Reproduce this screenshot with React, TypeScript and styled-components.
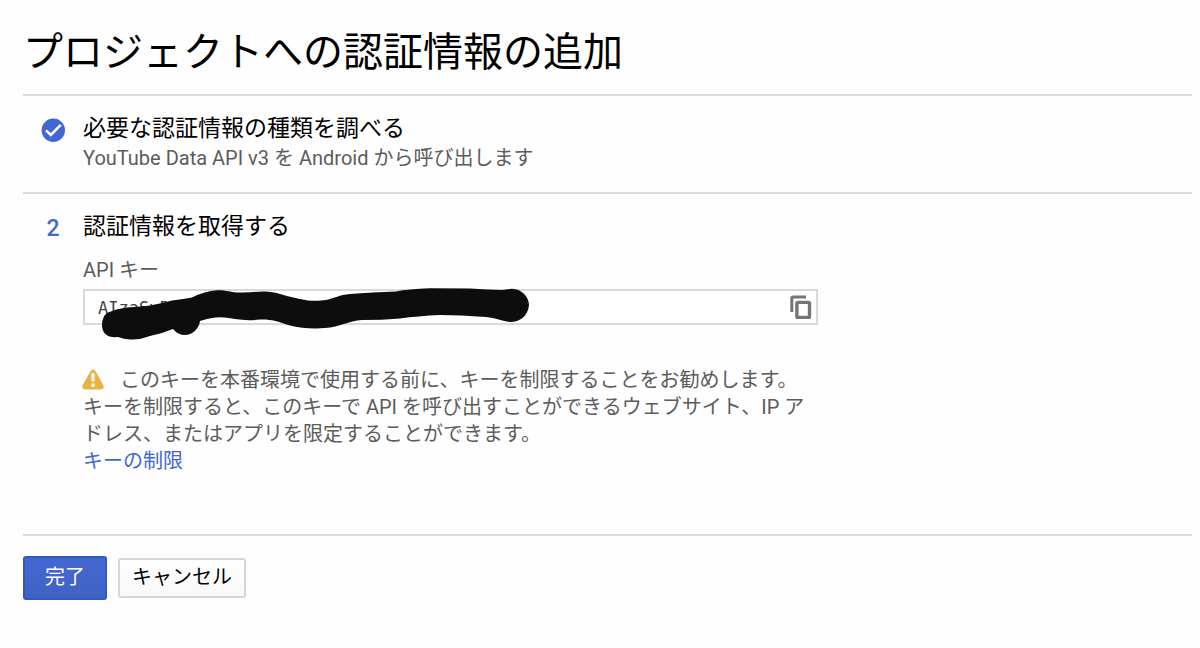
import React from "react";
import styled, { createGlobalStyle } from "styled-components";

const GlobalStyle = createGlobalStyle`
  *, *::before, *::after { box-sizing: border-box; }
  body {
    margin: 0;
    background: #fefefe;
    color: #000;
    font-family: Roboto, "Noto Sans CJK JP", sans-serif;
    font-size: 20px;
    line-height: 27px;
  }
`;

const Page = styled.main`
  padding: 0 8px 24px 23px;
`;

const Title = styled.h1`
  margin: 0;
  padding: 23px 0 11px;
  font-size: 40px;
  line-height: 60px;
  font-weight: 400;
`;

const Step = styled.section<{ $bottom: number }>`
  display: grid;
  grid-template-columns: 60px minmax(0, 1fr);
  border-top: 2px solid #d9d9d9;
  padding: 17px 0 ${(p) => p.$bottom}px;
`;

const Marker = styled.div`
  display: flex;
  align-items: center;
  justify-content: center;
  height: 34px;
  color: #4267d2;
  font-size: 23px;
  font-weight: 500;
`;

const StepTitle = styled.h2`
  margin: 0;
  font-size: 23px;
  line-height: 32px;
  font-weight: 400;
`;

const Summary = styled.p`
  margin: 0;
  color: #5c5c5c;
`;

const Form = styled.div`
  max-width: 735px;
`;

const Label = styled.label`
  display: block;
  margin: 14px 0 5px;
  color: #5c5c5c;
`;

const Field = styled.div`
  position: relative;
  display: flex;
  align-items: center;
  height: 36px;
  border: 2px solid #d9d9d9;
  background: #fff;
`;

const KeyInput = styled.input`
  flex: 1;
  min-width: 0;
  padding: 2px 0 0 13px;
  border: 0;
  outline: 0;
  background: transparent;
  color: #444;
  font-family: "DejaVu Sans Mono", monospace;
  font-size: 17px;
  line-height: 24px;
`;

const CopyButton = styled.button`
  display: flex;
  padding: 0;
  margin-right: 2px;
  border: 0;
  background: none;
  cursor: pointer;
`;

const Redaction = styled.svg`
  position: absolute;
  left: 15px;
  top: -5px;
  pointer-events: none;
`;

const Warning = styled.p`
  margin: 42px 0 0;
  padding-right: 8px;
  color: #5c5c5c;
`;

const WarningIcon = styled.svg`
  margin: 0 16px 0 -1px;
  vertical-align: -3px;
`;

const TextLink = styled.a`
  display: block;
  width: fit-content;
  color: #4267d2;
  text-decoration: none;
`;

const Actions = styled.footer`
  display: flex;
  align-items: center;
  gap: 11px;
  border-top: 2px solid #d9d9d9;
  padding-top: 20px;
`;

const Button = styled.button<{ $primary?: boolean }>`
  height: ${(p) => (p.$primary ? 44 : 40)}px;
  padding: ${(p) => (p.$primary ? "0 20px 1px" : "0 12px 1px")};
  border: 2px solid ${(p) => (p.$primary ? "#2d5acb" : "#d6d6d6")};
  border-radius: 3px;
  background: ${(p) =>
    p.$primary
      ? "linear-gradient(#4468d2, #3f62c4)"
      : "linear-gradient(#fff, #f8f8f8)"};
  color: ${(p) => (p.$primary ? "#fff" : "#000")};
  font: inherit;
  cursor: pointer;
`;

export default function App() {
  return (
    <>
      <GlobalStyle />
      <Page>
        <Title>プロジェクトへの認証情報の追加</Title>

        <Step $bottom={20}>
          <Marker>
            <svg width="24" height="24" viewBox="0 0 24 24" role="img" aria-label="完了">
              <circle cx="12.3" cy="12.3" r="11.7" fill="#4267d2" />
              <path d="M5 12.4 9.8 17 19.8 6.8" fill="none" stroke="#fff" strokeWidth="2.6" />
            </svg>
          </Marker>
          <div>
            <StepTitle>必要な認証情報の種類を調べる</StepTitle>
            <Summary>YouTube Data API v3 を Android から呼び出します</Summary>
          </div>
        </Step>

        <Step $bottom={59}>
          <Marker>2</Marker>
          <div>
            <StepTitle>認証情報を取得する</StepTitle>
            <Form>
              <Label htmlFor="api-key">API キー</Label>
              <Field>
                <KeyInput id="api-key" readOnly defaultValue="AIzaSyB" />
                <CopyButton type="button" aria-label="コピー">
                  <svg width="26" height="26" viewBox="0 0 26 26" fill="none" stroke="#757575">
                    <path d="M3.8 18V4.500Q3.800 3 5.400 3H18" strokeWidth="3" />
                    <rect x="8.900" y="8.400" width="12.600" height="15" rx="1" strokeWidth="3.400" />
                  </svg>
                </CopyButton>
                {/* Marker stroke that hides the key */}
                <Redaction width="432" height="56" viewBox="100 286 432 56" aria-hidden="true">
                  <path
                    fill="#0d0d0d"
                    d="M102 325Q102 316 108 312.500Q117 308.500 127 307.500Q141 306.500 150 305.500Q162 303.500 172 300.500Q184 299 192 297.500Q205 291 217 290.300C225 290 231 292.500 240 292.500C249 293 257 291 266 291.500C277 292 288 297 300 299C310 301.500 319 301 326 300C335 298 339 295 350 294Q372 292 396 291.500Q408 289 430 288.300L470 288.500Q488 289.500 502 290L512 288.700C522 289 529 297 529 305C528 316 520 322 510 322C502 321 496 318 486 317Q460 315 440 315Q418 316 400 318.500Q382 320 362 320C348 321 340 327 325 328C313 329 300 328 290 325.500C277 321 270 319 260 319.500Q247 321 235 319Q221 316 212 318Q206 319 200 321C199 329 192 335 185 335Q178 335 173 329Q161 334 150 336Q140 340 130 339.500Q124 339 118 337C108 338 102 334 102 325Z"
                  />
                </Redaction>
              </Field>
              <Warning>
                <WarningIcon width="22" height="21" viewBox="0 0 22 21" role="img" aria-label="警告">
                  <path
                    d="M8.800 1.800Q11-1.200 13.200 1.800L21.300 16Q22.800 20 19 20.500H3Q-.8 20 .7 16Z"
                    fill="#e8b340"
                  />
                  <path d="M11 4.300V12.500M11 14.500V18" stroke="#fff" strokeWidth="3.200" />
                </WarningIcon>
                このキーを本番環境で使用する前に、キーを制限することをお勧めします。キーを制限すると、このキーで API を呼び出すことができるウェブサイト、IP アドレス、またはアプリを限定することができます。
              </Warning>
              <TextLink href="#restrict">キーの制限</TextLink>
            </Form>
          </div>
        </Step>

        <Actions>
          <Button type="button" $primary>完了</Button>
          <Button type="button">キャンセル</Button>
        </Actions>
      </Page>
    </>
  );
}
